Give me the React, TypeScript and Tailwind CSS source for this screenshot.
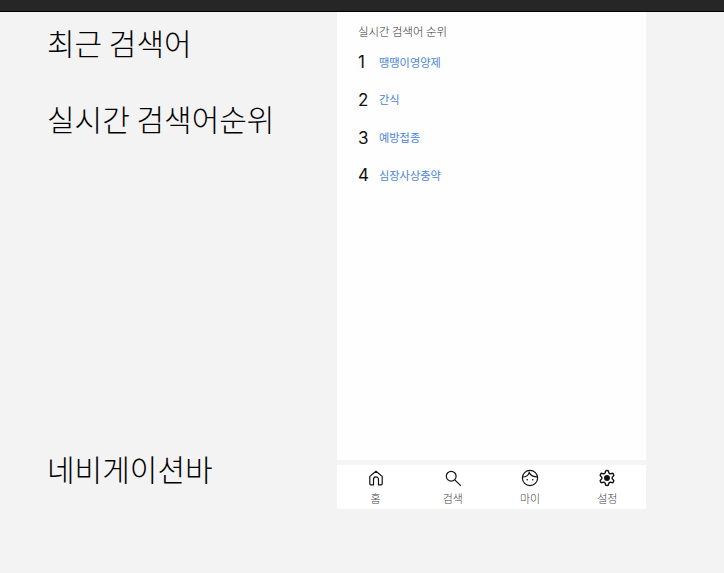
const FONT = "font-['Noto_Sans_CJK_KR','Noto_Sans',sans-serif]";

const ranks = ["땡땡이영양제", "간식", "예방접종", "심장사상충약"];

const HomeIcon = () => (
  <svg width="16" height="16" viewBox="0 0 16 16" fill="none" stroke="#111" strokeWidth="1.2">
    <path d="M1.8 6.4 8 1.2l6.2 5.2v7.4a1 1 0 0 1-1 1h-2.7V9.4a2.5 2.5 0 0 0-5 0v5.4H2.8a1 1 0 0 1-1-1z" strokeLinejoin="round" />
  </svg>
);

const SearchIcon = () => (
  <svg width="16" height="16" viewBox="0 0 16 16" fill="none" stroke="#111" strokeWidth="1.2">
    <circle cx="6.2" cy="6.2" r="4.9" />
    <path d="m9.8 9.8 5.6 5.6" strokeLinecap="round" />
  </svg>
);

const FaceIcon = () => (
  <svg width="18" height="18" viewBox="0 0 18 18" fill="none" stroke="#111" strokeWidth="1.2">
    <circle cx="9" cy="9" r="7.6" />
    <path d="M1.8 8c3.2 0 5.4-1.4 6.4-4.4 1.4 2.6 4.2 4.2 8 4.2" />
    <circle cx="6.2" cy="10.8" r="0.8" fill="#111" stroke="none" />
    <circle cx="11.8" cy="10.8" r="0.8" fill="#111" stroke="none" />
  </svg>
);

const GearIcon = () => (
  <svg width="18" height="18" viewBox="0 0 24 24" fill="none" stroke="#111" strokeWidth="1.9" strokeLinejoin="round">
    <path d="M12.22 2h-.44a2 2 0 0 0-2 2v.18a2 2 0 0 1-1 1.73l-.43.25a2 2 0 0 1-2 0l-.15-.08a2 2 0 0 0-2.73.73l-.22.38a2 2 0 0 0 .73 2.73l.15.1a2 2 0 0 1 1 1.72v.51a2 2 0 0 1-1 1.74l-.15.09a2 2 0 0 0-.73 2.73l.22.38a2 2 0 0 0 2.73.73l.15-.08a2 2 0 0 1 2 0l.43.25a2 2 0 0 1 1 1.73V20a2 2 0 0 0 2 2h.44a2 2 0 0 0 2-2v-.18a2 2 0 0 1 1-1.73l.43-.25a2 2 0 0 1 2 0l.15.08a2 2 0 0 0 2.73-.73l.22-.39a2 2 0 0 0-.73-2.73l-.15-.08a2 2 0 0 1-1-1.74v-.5a2 2 0 0 1 1-1.74l.15-.09a2 2 0 0 0 .73-2.73l-.22-.38a2 2 0 0 0-2.73-.73l-.15.08a2 2 0 0 1-2 0l-.43-.25a2 2 0 0 1-1-1.73V4a2 2 0 0 0-2-2z" />
    <circle cx="12" cy="12" r="3" fill="#111" />
  </svg>
);

const navItems = [
  { label: "홈", icon: <HomeIcon /> },
  { label: "검색", icon: <SearchIcon /> },
  { label: "마이", icon: <FaceIcon /> },
  { label: "설정", icon: <GearIcon /> },
];

export default function App() {
  return (
    <div className={`${FONT} flex h-[573px] w-[724px] flex-col overflow-hidden bg-[#f3f3f3]`}>
      <div className="h-3 shrink-0 border-b border-black bg-[#262626]" />
      <div className="flex">
        {/* 왼쪽 라벨 */}
        <div className="flex h-[497px] w-[337px] flex-col pl-[47px] text-[30px] leading-[46px] font-light text-black">
          <p className="mt-[7px]">최근 검색어</p>
          <p className="mt-[30px]">실시간 검색어순위</p>
          <p className="mt-auto mb-[18px]">네비게이션바</p>
        </div>

        {/* 폰 화면 */}
        <div className="flex h-[497px] w-[309px] flex-col bg-white">
          <div className="flex-1 bg-[#fefefe] pl-[21px]">
            <p className="mt-[10px] text-[11.4px] leading-[18px] font-light text-[#333]">실시간 검색어 순위</p>
            <ul className="mt-[8px] flex flex-col gap-[9.7px]">
              {ranks.map((name, i) => (
                <li key={name} className="flex h-[28px] items-center">
                  <span className="w-[21px] pt-[2px] font-['Inter',sans-serif] text-[17px] font-normal text-[#111]">{i + 1}</span>
                  <span className="text-[11.2px] text-[#4a86d8]">{name}</span>
                </li>
              ))}
            </ul>
          </div>
          <div className="h-[5px] bg-[#f5f5f5]" />
          <nav className="grid h-[44px] grid-cols-4 bg-white">
            {navItems.map((item) => (
              <div key={item.label} className="flex flex-col items-center pt-[4px]">
                <div className="flex h-[18px] items-center justify-center">{item.icon}</div>
                <span className="mt-[3px] text-[11px] leading-[16px] font-light text-[#444]">{item.label}</span>
              </div>
            ))}
          </nav>
        </div>
      </div>
    </div>
  );
}
